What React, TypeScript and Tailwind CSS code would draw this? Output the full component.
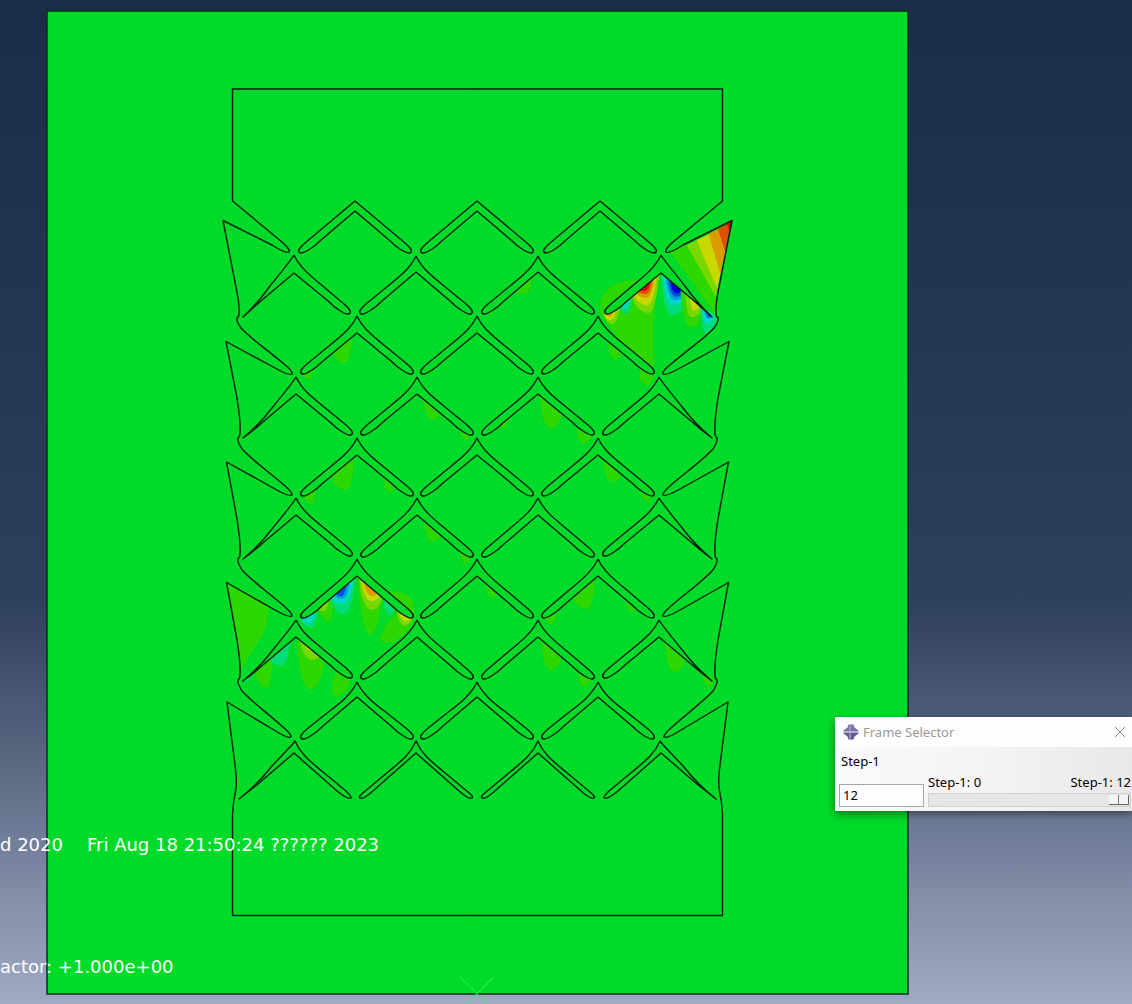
import React, { useState } from 'react';

const BASE = '#00da28';
const LIME = '#2cd800';
const OLIVE = '#78d800';
const YELLOW = '#c8d800';
const ORANGE = '#dc9c00';
const RUST = '#dc5000';
const RED = '#d80a00';
const TEAL = '#00dc78';
const CYAN = '#00d8c8';
const SKY = '#00a0dc';
const BLUE = '#0050dc';
const NAVY = '#0000d8';

/** A contour lobe hanging from the edge x1,y1 - x2,y2 down to bx,by. */
type Lobe = [string, number, number, number, number, number, number];

const lobe = ([, x1, y1, x2, y2, bx, by]: Lobe) =>
  `M${x1} ${y1}C${x1} ${y1 + (by - y1) * 0.5} ${(x1 + bx) / 2} ${by} ${bx} ${by}C${(x2 + bx) / 2} ${by} ${x2} ${y2 + (by - y2) * 0.5} ${x2} ${y2}Z`;

const Lobes = ({ items }: { items: Lobe[] }) => (
  <>
    {items.map((item, i) => (
      <path key={i} d={lobe(item)} fill={item[0]} />
    ))}
  </>
);

const faint: Lobe[] = [
  [LIME, 332, 349, 352, 334, 345, 363],
  [LIME, 302, 374, 314, 366, 309, 379],
  [LIME, 388, 355, 394, 360, 391, 365],
  [LIME, 423, 398, 440, 412, 432, 420],
  [LIME, 460, 431, 470, 434, 466, 440],
  [LIME, 332, 476, 354, 457, 347, 490],
  [LIME, 303, 494, 316, 486, 312, 504],
  [LIME, 384, 478, 395, 487, 389, 492],
  [LIME, 424, 520, 440, 533, 432, 542],
  [LIME, 460, 551, 470, 556, 465, 563],
  [LIME, 514, 291, 532, 275, 526, 294],
  [LIME, 486, 313, 494, 306, 490, 315],
  [LIME, 540, 393, 562, 412, 550, 429],
  [LIME, 500, 425, 508, 417, 504, 428],
  [LIME, 577, 429, 592, 432, 583, 444],
  [LIME, 640, 366, 654, 374, 646, 385],
  [LIME, 608, 337, 622, 349, 615, 360],
  [LIME, 603, 457, 621, 474, 613, 482],
  [LIME, 641, 490, 651, 496, 646, 501],
  [LIME, 485, 580, 498, 592, 492, 598],
  [LIME, 574, 598, 595, 577, 587, 609],
  [LIME, 545, 617, 557, 609, 551, 624],
  [LIME, 626, 599, 636, 606, 631, 612],
  [LIME, 541, 637, 562, 656, 550, 670],
  [LIME, 578, 673, 591, 677, 584, 687],
  [LIME, 665, 641, 685, 659, 673, 672],
  [LIME, 703, 675, 714, 679, 709, 687],
];

const upperRight: Lobe[] = [
  [OLIVE, 72, 370, 120, 335, 98, 402],
  [YELLOW, 72, 368, 108, 340, 93, 391],
  [ORANGE, 75, 366, 103, 345, 91, 379],
  [TEAL, 115, 340, 158, 305, 138, 371],
  [CYAN, 122, 333, 147, 315, 136, 355],
  [OLIVE, 156, 310, 236, 245, 205, 369],
  [YELLOW, 161, 306, 229, 250, 202, 346],
  [ORANGE, 166, 302, 223, 256, 200, 324],
  [RUST, 170, 299, 217, 262, 199, 312],
  [RED, 174, 296, 211, 268, 194, 303],
  [TEAL, 244, 252, 325, 312, 273, 377],
  [CYAN, 250, 256, 321, 310, 277, 346],
  [SKY, 258, 262, 317, 308, 283, 331],
  [BLUE, 265, 267, 313, 305, 288, 320],
  [NAVY, 272, 272, 308, 301, 290, 310],
  [LIME, 302, 295, 375, 350, 330, 412],
  [OLIVE, 316, 305, 368, 350, 334, 382],
  [YELLOW, 330, 320, 357, 345, 342, 362],
  [TEAL, 361, 350, 412, 378, 378, 432],
  [CYAN, 367, 352, 400, 378, 379, 402],
  [SKY, 374, 362, 396, 378, 383, 387],
  [BLUE, 380, 368, 393, 378, 387, 381],
];

const lowerLeft: Lobe[] = [
  [TEAL, 256, 173, 309, 135, 288, 203],
  [CYAN, 258, 172, 301, 140, 283, 189],
  [SKY, 264, 170, 286, 155, 276, 173],
  [LIME, 308, 135, 356, 98, 343, 184],
  [OLIVE, 308, 135, 342, 108, 325, 154],
  [TEAL, 346, 108, 420, 45, 386, 163],
  [CYAN, 348, 105, 414, 50, 382, 132],
  [SKY, 354, 100, 405, 58, 382, 117],
  [BLUE, 360, 97, 394, 68, 379, 109],
  [LIME, 430, 48, 500, 100, 464, 224],
  [OLIVE, 433, 50, 503, 105, 468, 149],
  [YELLOW, 440, 55, 496, 100, 468, 124],
  [ORANGE, 446, 60, 488, 92, 471, 108],
  [TEAL, 505, 105, 540, 135, 522, 166],
  [OLIVE, 544, 140, 592, 172, 568, 197],
  [YELLOW, 552, 146, 588, 172, 571, 184],
  [LIME, 120, 328, 172, 280, 157, 384],
  [TEAL, 162, 288, 224, 238, 200, 317],
  [LIME, 246, 230, 328, 298, 284, 390],
  [OLIVE, 256, 236, 314, 285, 291, 299],
  [YELLOW, 268, 245, 296, 268, 283, 270],
  [TEAL, 84, 360, 104, 350, 96, 366],
];

/** Half of a slit, from the outer apex round the tip to the inner apex. */
const arm = (ax: number, ay: number, iy: number, ty: number, s: 1 | -1, straight: boolean) => {
  const x = (d: number) => ax + s * d;
  const outer = straight
    ? `L${x(50)} ${ty - 10}`
    : `C${x(6)} ${ay + 13} ${x(18)} ${ay + 22} ${x(29)} ${ay + (ty - ay) * 0.53}L${x(50)} ${ty - 10}`;
  return `M${ax} ${ay}${outer}Q${x(58)} ${ty - 3} ${x(56)} ${ty - 1}Q${x(54)} ${ty + 2} ${x(45)} ${ty - 4}Q${x(40)} ${ty - 7} ${x(34)} ${ty - 13}L${ax} ${iy}`;
};

const slit = (ax: number, ay: number, iy: number, ty: number, straight = false) =>
  arm(ax, ay, iy, ty, -1, straight) + arm(ax, ay, iy, ty, 1, straight);

const innerRows: [number[], number, number, number, boolean?][] = [
  [[355, 477, 600], 201, 211, 253, true],
  [[416, 538], 256, 272, 314],
  [[357, 477, 598], 316, 333, 374],
  [[417, 538], 377, 394, 435],
  [[357, 477, 598], 438, 455, 496],
  [[417, 538], 498, 515, 557],
  [[357, 477, 598], 559, 576, 618],
  [[417, 538], 620, 637, 679],
  [[357, 477, 598], 682, 697, 739],
];

const edgeRows: [number, number, number, number][] = [
  [294, 255, 273, 317],
  [296, 377, 394, 438],
  [296, 498, 515, 559],
  [296, 620, 637, 681],
];

const edgeSlit = (ax: number, ay: number, iy: number, ty: number) =>
  `${arm(ax, ay, iy, ty - 3, 1, false)}M${ax} ${ay}C${ax - 5} ${ay + 8} ${ax - 16} ${ay + 21} ${ax - 24} ${ay + 31}Q${ax - 36} ${ty - 14} 243 ${ty}Q${ax - 42} ${ty - 8} ${ax - 32} ${ty - 17}L${ax} ${iy}`;

const thinSlit = (ax: number) =>
  `M${ax} 741C${ax + 6} 755 ${ax + 16} 762 ${ax + 28} 772L${ax + 52} 792Q${ax + 58} 797 ${ax + 56} 798Q${ax + 53} 800 ${ax + 42} 790L${ax} 753L${ax - 42} 790Q${ax - 53} 800 ${ax - 56} 798Q${ax - 58} 797 ${ax - 52} 792L${ax - 28} 772C${ax - 16} 762 ${ax - 6} 755 ${ax} 741Z`;

const thinEdge =
  'M295 741C301 755 311 762 323 772L346 791Q352 797 351 798Q348 800 337 791L294 753L258 784L239 799Q256 786 272 766L288 749Q293 744 295 741Z';

const sideProfile =
  'M478 89H232.500V201L282 242Q291 250 289 252Q286 254 272 245L223 220.500L235 282Q240 306 239 313Q239 317 237 318Q236 321 241 328C250 338 265 348 284 364Q293 371 292 374Q289 376 275 368L226 341.500L237 398Q241 424 240 433Q240 437 238 438Q237 441 242 449C251 459 265 469 284 485Q293 493 292 495Q289 497 275 489L226.500 462L237 519Q241 545 240 554Q240 558 238 559Q237 562 242 570C251 580 265 590 284 606Q293 614 292 616Q289 618 275 610L226.500 582.500L237 640Q241 666 240 675Q240 679 238 680Q237 683 242 691C251 701 265 711 283 727Q292 735 291 737Q288 739 274 730L227 702L235 765Q237 780 236 788Q233 802 232.500 815V915.500H478';

function StressPlot() {
  return (
    <svg viewBox="0 0 1132 1004" className="block h-auto w-full" role="img" aria-label="Stress contour plot">
      <rect x="47" y="11" width="861" height="983" fill={BASE} stroke="#0c2c1c" strokeWidth="1.500" />
      <Lobes items={faint} />
      <g transform="translate(580 190) scale(.33333)">
        <path fill={LIME} d="M272 187L326 162L408 318L406 374Z" />
        <path fill={OLIVE} d="M320 165L356 149L412 292L408 322Z" />
        <path fill={YELLOW} d="M350 151L390 131L422 246L412 296Z" />
        <path fill={ORANGE} d="M386 132L416 116L437 182L421 252Z" />
        <path fill={RUST} d="M414 117L458 94L436 187Z" />
        <path fill={RED} d="M440 103L458 93L451 126Z" />
        <path fill={LIME} d="M62 372Q55 330 75 305Q105 272 165 270L240 245L226 330L220 420L222 520L212 576Q195 590 180 570V520L110 440Z" />
        <path fill={YELLOW} d="M225 255L240 248L231 290Z" />
        <Lobes items={upperRight} />
      </g>
      <g transform="translate(215 560) scale(.33333)">
        <path fill={LIME} d="M37 68L160 132Q162 185 145 220L102 290L78 328Q75 260 50 140Z" />
        <path fill={LIME} d="M505 94Q565 88 590 118Q606 148 592 195Q565 232 530 247Q500 252 493 235Q510 205 517 185L545 165Z" />
        <path fill={LIME} d="M362 335L408 356Q402 385 385 400Q362 416 351 402Q348 372 362 335Z" />
        <Lobes items={lowerLeft} />
      </g>
      <g fill={BASE} stroke="#001c04" strokeWidth="1.400" strokeLinejoin="round">
        {innerRows.map(([xs, ay, iy, ty, straight]) =>
          xs.map((ax) => <path key={`${ax}-${ay}`} d={slit(ax, ay, iy, ty, straight)} />),
        )}
        <path d={thinSlit(416)} />
        <path d={thinSlit(538)} />
        {['', 'translate(955 0) scale(-1 1)'].map((side) => (
          <g key={side} transform={side || undefined}>
            <path fill="none" d={sideProfile} />
            {edgeRows.map(([ax, ay, iy, ty]) => (
              <path key={ay} d={edgeSlit(ax, ay, iy, ty)} />
            ))}
            <path d={thinEdge} />
          </g>
        ))}
      </g>
      <path d="M460 977L494 1010M494 977L460 1010" stroke="#3cf05a" strokeWidth="1" />
    </svg>
  );
}

function FrameSelector() {
  const [frame, setFrame] = useState(12);
  return (
    <section
      aria-label="Frame Selector"
      className="absolute right-0 top-[717px] w-[297px] bg-gradient-to-r from-[#fbf9fb] via-[#f5f3f4] to-[#e9e8e9] font-['Noto_Sans','Noto_Sans_CJK_SC',sans-serif] text-[13px] leading-4 text-black shadow-[0_3px_8px_rgba(0,0,0,0.45)]"
    >
      <header className="flex h-[30px] items-center bg-[#fefcfe] pl-2 pr-1 text-[#999]">
        <svg viewBox="0 0 16 16" className="mr-1 size-4" aria-hidden="true">
          <path d="M5.500 .5H10.500L11.500 3.500L15.500 6.500V7.500H.5V6.500L4.500 3.500Z" fill="#7773a8" />
          <path d="M5.500 15.500H10.500L11.500 12.500L15.500 9.500V8.500H.5V9.500L4.500 12.500Z" fill="#5f5b91" />
          <path d="M7 1.500V7M7 9V14.500" stroke="#a5a1cb" strokeWidth="1.500" />
        </svg>
        <h1 className="flex-1">Frame Selector</h1>
        <button type="button" aria-label="Close" className="size-4">
          <svg viewBox="0 0 16 16" className="size-4" fill="none" stroke="#8c8c8c" strokeWidth="1">
            <path d="M3 3L13 13M13 3L3 13" />
          </svg>
        </button>
      </header>
      <div className="pb-1 pl-1 pr-px pt-1.5">
        <p className="pl-0.5">Step-1</p>
        <div className="mt-[5px] flex items-end gap-1">
          <input
            type="text"
            aria-label="Frame"
            value={frame}
            onChange={(e) => setFrame(Math.min(12, Number(e.target.value) || 0))}
            className="h-[23px] w-[85px] border border-[#a5a5aa] bg-[#fefcfe] px-[3px] pb-0.5 outline-none"
          />
          <div className="flex-1">
            <div className="flex justify-between">
              <label htmlFor="frame-slider">Step-1: 0</label>
              <span>Step-1: 12</span>
            </div>
            <input
              id="frame-slider"
              type="range"
              min={0}
              max={12}
              value={frame}
              onChange={(e) => setFrame(Number(e.target.value))}
              className="mt-[3px] block h-3.5 w-full appearance-none border border-[#d2d2d4] bg-[#e6e6e8] px-px [&::-webkit-slider-thumb]:h-2.5 [&::-webkit-slider-thumb]:w-5 [&::-webkit-slider-thumb]:appearance-none [&::-webkit-slider-thumb]:border-b [&::-webkit-slider-thumb]:border-r [&::-webkit-slider-thumb]:border-[#666] [&::-webkit-slider-thumb]:bg-[linear-gradient(90deg,#f4f4f4_9px,#777_9px,#777_10px,#f4f4f4_10px)]"
            />
          </div>
        </div>
      </div>
    </section>
  );
}

export default function App() {
  return (
    <main className="relative min-h-screen overflow-hidden bg-[linear-gradient(180deg,#1b2c46_0%,#24354f_30%,#2f405a_60%,#586680_75%,#8590ab_90%,#a0aac4_100%)] font-['DejaVu_Sans',sans-serif] text-[18px] leading-6 text-white">
      <StressPlot />
      <p className="absolute left-0 top-[833px] flex gap-6 whitespace-nowrap">
        <span>d 2020</span>
        <span>Fri Aug 18 21:50:24 ?????? 2023</span>
      </p>
      <p className="absolute left-0 top-[955px] whitespace-nowrap">actor: +1.000e+00</p>
      <FrameSelector />
    </main>
  );
}
